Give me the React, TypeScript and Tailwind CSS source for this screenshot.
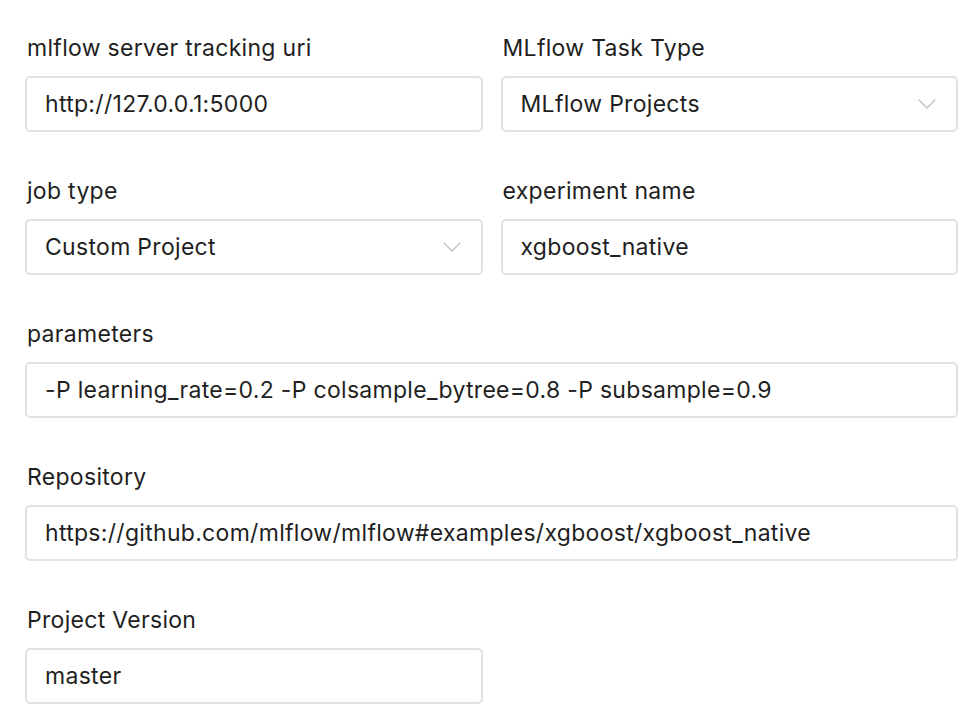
type FieldProps = {
  label: string;
  value: string;
  select?: boolean;
  wide?: boolean;
};

function Chevron() {
  return (
    <svg width="18" height="10" viewBox="0 0 18 10" fill="none" className="shrink-0">
      <path d="M1 1l8 8 8-8" stroke="#c4c4c8" strokeWidth="1.5" strokeLinecap="round" strokeLinejoin="round" />
    </svg>
  );
}

function Field({ label, value, select, wide }: FieldProps) {
  return (
    <div className={wide ? "col-span-2" : ""}>
      <label className="block pl-[2px] text-[23px] leading-[28px] tracking-[0.3px] text-[#1f1f1f]">
        {label}
      </label>
      <div className="mt-[14px] flex h-[56px] items-center justify-between rounded-[5px] border-2 border-[#e1e1e6] bg-white pl-[18px] pr-[20px]">
        <span className="whitespace-nowrap text-[23px] tracking-[0.3px] text-[#1f1f1f]">{value}</span>
        {select && <Chevron />}
      </div>
    </div>
  );
}

export default function App() {
  return (
    <div
      className="min-h-[722px] bg-white pl-[25px] pt-[34px]"
      style={{ fontFamily: "Inter, 'Noto Sans', sans-serif" }}
    >
      <div className="grid w-[933px] grid-cols-2 gap-x-[18px] gap-y-[45px]">
        <Field label="mlflow server tracking uri" value="http://127.0.0.1:5000" />
        <Field label="MLflow Task Type" value="MLflow Projects" select />
        <Field label="job type" value="Custom Project" select />
        <Field label="experiment name" value="xgboost_native" />
        <Field
          label="parameters"
          value="-P learning_rate=0.2 -P colsample_bytree=0.8 -P subsample=0.9"
          wide
        />
        <Field
          label="Repository"
          value="https://github.com/mlflow/mlflow#examples/xgboost/xgboost_native"
          wide
        />
        <Field label="Project Version" value="master" />
      </div>
    </div>
  );
}
